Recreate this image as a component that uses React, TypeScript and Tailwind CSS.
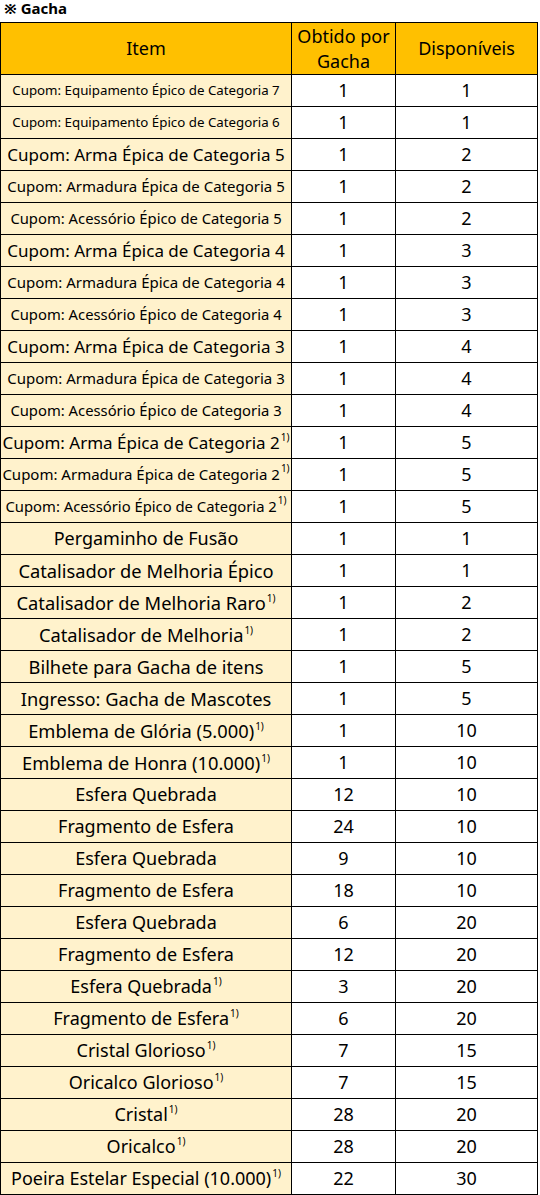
import React from "react";

type Row = { name: string; size: string; sup?: boolean; a: string; b: string };

const rows: Row[] = [
  { name: "Cupom: Equipamento Épico de Categoria 7", size: "text-[13.3px]", a: "1", b: "1" },
  { name: "Cupom: Equipamento Épico de Categoria 6", size: "text-[13.3px]", a: "1", b: "1" },
  { name: "Cupom: Arma Épica de Categoria 5", size: "text-[17px]", a: "1", b: "2" },
  { name: "Cupom: Armadura Épica de Categoria 5", size: "text-[15px]", a: "1", b: "2" },
  { name: "Cupom: Acessório Épico de Categoria 5", size: "text-[14.8px]", a: "1", b: "2" },
  { name: "Cupom: Arma Épica de Categoria 4", size: "text-[17px]", a: "1", b: "3" },
  { name: "Cupom: Armadura Épica de Categoria 4", size: "text-[15px]", a: "1", b: "3" },
  { name: "Cupom: Acessório Épico de Categoria 4", size: "text-[14.8px]", a: "1", b: "3" },
  { name: "Cupom: Arma Épica de Categoria 3", size: "text-[17px]", a: "1", b: "4" },
  { name: "Cupom: Armadura Épica de Categoria 3", size: "text-[15px]", a: "1", b: "4" },
  { name: "Cupom: Acessório Épico de Categoria 3", size: "text-[14.8px]", a: "1", b: "4" },
  { name: "Cupom: Arma Épica de Categoria 2", size: "text-[17px]", sup: true, a: "1", b: "5" },
  { name: "Cupom: Armadura Épica de Categoria 2", size: "text-[15px]", sup: true, a: "1", b: "5" },
  { name: "Cupom: Acessório Épico de Categoria 2", size: "text-[14.8px]", sup: true, a: "1", b: "5" },
  { name: "Pergaminho de Fusão", size: "text-[18px]", a: "1", b: "1" },
  { name: "Catalisador de Melhoria Épico", size: "text-[18.3px]", a: "1", b: "1" },
  { name: "Catalisador de Melhoria Raro", size: "text-[18.3px]", sup: true, a: "1", b: "2" },
  { name: "Catalisador de Melhoria", size: "text-[18.3px]", sup: true, a: "1", b: "2" },
  { name: "Bilhete para Gacha de itens", size: "text-[18.3px]", a: "1", b: "5" },
  { name: "Ingresso: Gacha de Mascotes", size: "text-[18.3px]", a: "1", b: "5" },
  { name: "Emblema de Glória (5.000)", size: "text-[18.3px]", sup: true, a: "1", b: "10" },
  { name: "Emblema de Honra (10.000)", size: "text-[18.3px]", sup: true, a: "1", b: "10" },
  { name: "Esfera Quebrada", size: "text-[18px]", a: "12", b: "10" },
  { name: "Fragmento de Esfera", size: "text-[18px]", a: "24", b: "10" },
  { name: "Esfera Quebrada", size: "text-[18px]", a: "9", b: "10" },
  { name: "Fragmento de Esfera", size: "text-[18px]", a: "18", b: "10" },
  { name: "Esfera Quebrada", size: "text-[18px]", a: "6", b: "20" },
  { name: "Fragmento de Esfera", size: "text-[18px]", a: "12", b: "20" },
  { name: "Esfera Quebrada", size: "text-[18px]", sup: true, a: "3", b: "20" },
  { name: "Fragmento de Esfera", size: "text-[18px]", sup: true, a: "6", b: "20" },
  { name: "Cristal Glorioso", size: "text-[18px]", sup: true, a: "7", b: "15" },
  { name: "Oricalco Glorioso", size: "text-[18px]", sup: true, a: "7", b: "15" },
  { name: "Cristal", size: "text-[18px]", sup: true, a: "28", b: "20" },
  { name: "Oricalco", size: "text-[18px]", sup: true, a: "28", b: "20" },
  { name: "Poeira Estelar Especial (10.000)", size: "text-[18px]", sup: true, a: "22", b: "30" },
];

const cell = "border-r border-b border-black flex items-center justify-center whitespace-nowrap";

export default function App() {
  return (
    <div
      className="w-[540px] bg-white text-black"
      style={{ fontFamily: '"Noto Sans", "Noto Sans CJK KR", sans-serif' }}
    >
      <div className="h-[22px] pl-[4px] text-[15px] leading-[16px] font-bold">※ Gacha</div>
      <div className="grid grid-cols-[291px_104px_142px] border-l border-t border-black w-[538px]">
        <div className={`${cell} h-[52px] bg-[#FFC000] text-[18px]`}>Item</div>
        <div className={`${cell} h-[52px] bg-[#FFC000] text-[18px] leading-[25px] text-center flex-col`}>
          <span>Obtido por</span>
          <span>Gacha</span>
        </div>
        <div className={`${cell} h-[52px] bg-[#FFC000] text-[18px]`}>Disponíveis</div>
        {rows.map((r, i) => (
          <React.Fragment key={i}>
            <div className={`${cell} h-[32px] bg-[#FFF2CC] ${r.size}`}>
              <span>
                {r.name}
                {r.sup && <sup className="text-[10px] -top-[8px] ml-[1px]">1)</sup>}
              </span>
            </div>
            <div className={`${cell} h-[32px] text-[18px]`}>{r.a}</div>
            <div className={`${cell} h-[32px] text-[18px]`}>{r.b}</div>
          </React.Fragment>
        ))}
      </div>
    </div>
  );
}
